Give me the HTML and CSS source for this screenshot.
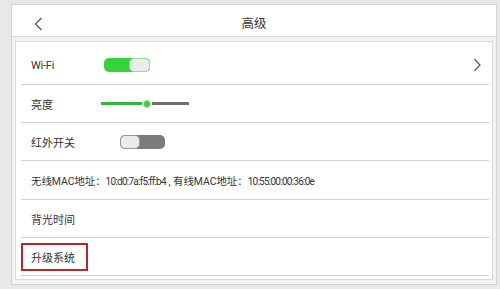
FILE: index.html
```html
<!DOCTYPE html>
<html lang="zh-CN">
<head>
	<meta charset="utf-8">
	<meta name="viewport" content="width=device-width, initial-scale=1">
	<title>高级</title>
	<link rel="stylesheet" href="styles.css">
</head>
<body>
<div class="panel">
	<header class="bar">
		<svg class="back" width="9" height="14" viewBox="0 0 9 14"><path d="M7.5 1 L1.5 7 L7.5 13" fill="none" stroke="#555" stroke-width="1.3"/></svg>
		<h1>高级</h1>
	</header>

	<ul class="card">
		<li class="row first">
			<span class="label">Wi-Fi</span>
			<span class="switch on wifi"><span class="knob"></span></span>
			<svg class="more" width="8" height="14" viewBox="0 0 8 14"><path d="M1.5 1 L7 7 L1.5 13" fill="none" stroke="#555" stroke-width="1.2"/></svg>
		</li>
		<li class="row">
			<span class="label">亮度</span>
			<span class="slider">
				<span class="fill"></span><span class="thumb"></span><span class="rest"></span>
			</span>
		</li>
		<li class="row">
			<span class="label">红外开关</span>
			<span class="switch off ir"><span class="knob"></span></span>
		</li>
		<li class="row mac">
			<span class="label">无线MAC地址：<span class="addr">10:d0:7a:f5:ff:b4</span> , 有线MAC地址：<span class="addr">10:55:00:00:36:0e</span></span>
		</li>
		<li class="row">
			<span class="label">背光时间</span>
		</li>
		<li class="row">
			<span class="label picked">升级系统</span>
		</li>
	</ul>
</div>
</body>
</html>
```

FILE: styles.css
```css
html,body
{
	padding: 0;
	border: 0;
	margin: 0;
}

body
{
	width: 500px;
	height: 289px;
	overflow: hidden;
	background: #e8e8e8;
	color: #333;
	font-family: Roboto, "Noto Sans CJK SC", sans-serif;
	font-size: 11px;
}

.panel
{
	display: flex;
	flex-direction: column;
	height: 279px;
	border: 1px solid #d2d2d2;
	margin: 4px 3px 0 11px;
	background: #f2f2f2;
}

.bar
{
	position: relative;
	display: flex;
	align-items: center;
	justify-content: center;
	height: 29px;
	padding-top: 3px;
	border-bottom: 1px solid #dcdcdc;
	background: #fff;
}

.bar h1
{
	margin: 0;
	font-size: 12.5px;
	font-weight: normal;
	color: #333;
}

.back
{
	position: absolute;
	left: 22px;
	top: 12px;
}

.card
{
	flex: 1;
	padding: 0 3px 3px 5px;
	border: 1px solid #dadada;
	margin: 4px 3px 4px 3px;
	background: #fff;
	list-style: none;
}

.row
{
	display: flex;
	align-items: center;
	height: 37px;
	padding-left: 10px;
	border-bottom: 1px solid #cfcfcf;
}

.row.first
{
	height: 38px;
	padding-top: 4px;
	letter-spacing: -0.2px;
}

.row.mac
{
	height: 38px;
	font-size: 10.4px;
}

.addr
{
	font-size: 10px;
	letter-spacing: -0.75px;
}

.label
{
	white-space: nowrap;
}

.picked
{
	display: flex;
	align-items: center;
	width: 55px;
	height: 24px;
	padding-left: 8px;
	border: 2px solid #b8262c;
	margin-left: -10px;
}

.switch
{
	display: flex;
	width: 46px;
	height: 14px;
	box-sizing: border-box;
	border-radius: 5px;
	letter-spacing: 0;
}

.switch .knob
{
	width: 21px;
	height: 100%;
	box-sizing: border-box;
	border: 1px solid #c4c4c4;
	border-radius: 5px;
	background: #ebebeb;
}

.switch.on
{
	justify-content: flex-end;
	background: #33d33b;
}

.switch.on .knob
{
	border-color: #8fe08f;
}

.switch.off
{
	width: 45px;
	background: #7c7c7c;
}

.switch.off .knob
{
	width: 20px;
	border-color: #9a9a9a;
}

.wifi
{
	margin-left: 50px;
}

.ir
{
	margin-left: 45px;
}

.more
{
	margin-left: auto;
	margin-right: 8px;
}

.slider
{
	display: flex;
	align-items: center;
	margin-left: 48px;
}

.slider .fill
{
	width: 41px;
	height: 3px;
	background: #2fb83a;
}

.slider .thumb
{
	width: 6px;
	height: 6px;
	border: 1px solid #9ee29e;
	border-radius: 50%;
	margin: 0 1px;
	background: #3fcf46;
}

.slider .rest
{
	width: 37px;
	height: 3px;
	background: #707070;
}
```
